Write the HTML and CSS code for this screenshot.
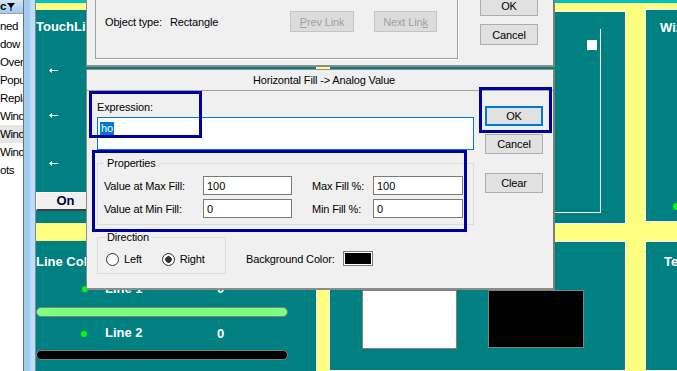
FILE: index.html
```html
<!DOCTYPE html>
<html lang="en">
<head>
  <meta charset="UTF-8">
  <title>Horizontal Fill -&gt; Analog Value</title>
  <link rel="stylesheet" href="styles.css">
</head>
<body>
<div class="screen">

  <aside class="tree">
    <div class="tree-head">c<svg class="pin" width="8" height="9" viewBox="0 0 8 9"><path d="M0 1h8L4 6z" fill="#000"/><path d="M3.5 5h1v4h-1z" fill="#000"/></svg></div>
    <ul class="tree-list">
      <li>ned</li>
      <li>dow</li>
      <li>Over</li>
      <li>Popu</li>
      <li>Repla</li>
      <li>Wind</li>
      <li class="sel">Wind</li>
      <li>Wind</li>
      <li>ots</li>
    </ul>
  </aside>
  <div class="splitter"></div>

  <!-- the HMI screen being edited -->
  <main class="hmi">
    <section class="panel p-a1">
      <div class="hmi-text touch-title">TouchLine</div>
      <svg class="arrow arrow-1" width="9" height="5" viewBox="0 0 9 5"><path d="M0 2.5L3 0v2h6v1H3v2z" fill="#fff"/></svg>
      <svg class="arrow arrow-2" width="9" height="5" viewBox="0 0 9 5"><path d="M0 2.5L3 0v2h6v1H3v2z" fill="#fff"/></svg>
      <svg class="arrow arrow-3" width="9" height="5" viewBox="0 0 9 5"><path d="M0 2.5L3 0v2h6v1H3v2z" fill="#fff"/></svg>
      <div class="on-btn">On</div>
    </section>

    <section class="panel p-b1">
      <div class="frame"></div>
      <div class="knob"></div>
    </section>

    <section class="panel p-c1">
      <div class="hmi-text wiz-title">Wizard</div>
      <span class="dot dot-c"></span>
    </section>

    <section class="panel p-a2">
      <div class="hmi-text line-title">Line Color</div>
      <span class="dot dot-1"></span>
      <div class="hmi-text line-name name-1">Line 1</div>
      <div class="hmi-text line-val val-1">0</div>
      <div class="bar bar-green"></div>
      <span class="dot dot-2"></span>
      <div class="hmi-text line-name name-2">Line 2</div>
      <div class="hmi-text line-val val-2">0</div>
      <div class="bar bar-black"></div>
    </section>

    <section class="panel p-b2">
      <div class="rect rect-white"></div>
      <div class="rect rect-black"></div>
    </section>

    <section class="panel p-c2">
      <div class="hmi-text text-title">Text</div>
    </section>
  </main>

  <!-- object properties dialog (behind) -->
  <div class="dlg dlg-back">
    <div class="groupbox">
      <span class="obj-label">Object type:</span>
      <span>Rectangle</span>
      <div class="links">
        <button class="btn off link-prev"><u>P</u>rev Link</button>
        <button class="btn off link-next">Next Lin<u>k</u></button>
      </div>
    </div>
    <div class="side side-back">
      <button class="btn">OK</button>
      <button class="btn">Cancel</button>
    </div>
  </div>

  <!-- horizontal fill dialog -->
  <div class="dlg dlg-front">
    <div class="dlg-title">Horizontal Fill -&gt; Analog Value</div>
    <div class="dlg-body">
      <div class="form">
        <div class="label">Expression:</div>
        <div class="expr"><span class="expr-sel">ho</span></div>

        <fieldset class="group props">
          <legend>Properties</legend>
          <div class="props-grid">
            <label>Value at Max Fill:</label><input value="100">
            <label class="lbl-2">Max Fill %:</label><input value="100">
            <label>Value at Min Fill:</label><input value="0">
            <label class="lbl-2">Min Fill %:</label><input value="0">
          </div>
        </fieldset>

        <div class="form-foot">
          <fieldset class="group direction">
            <legend>Direction</legend>
            <div class="radios">
              <span class="radio"></span><span class="radio-text">Left</span>
              <span class="radio on"></span><span class="radio-text">Right</span>
            </div>
          </fieldset>
          <div class="bg-color">Background Color: <span class="swatch"></span></div>
        </div>
      </div>

      <div class="side side-front">
        <button class="btn btn-default">OK</button>
        <button class="btn btn-cancel">Cancel</button>
        <button class="btn btn-clear">Clear</button>
      </div>
    </div>
  </div>

  <!-- highlight marks drawn over the screenshot -->
  <div class="mark mark-expr"></div>
  <div class="mark mark-props"></div>
  <div class="mark mark-ok"></div>
</div>
</body>
</html>
```

FILE: styles.css
```css
* {
  box-sizing: border-box;
}

html, body {
  margin: 0;
}

body {
  width: 677px;
  height: 371px;
  overflow: hidden;
  font-family: "Liberation Sans", Arial, sans-serif;
}

.screen {
  position: relative;
  display: flex;
  width: 677px;
  height: 371px;
  overflow: hidden;
  background: #f0f0f0;
}

/* project tree */
.tree {
  width: 24px;
  flex: none;
  background: #fff;
  border-right: 1px solid #6f6f6f;
  overflow: hidden;
  font-size: 11.5px;
  letter-spacing: -0.4px;
  color: #000;
}

.tree-head {
  height: 14px;
  display: flex;
  align-items: center;
  gap: 1px;
  font-weight: bold;
  line-height: 13px;
  background: linear-gradient(#d6e7f8, #a6c7eb);
  border-bottom: 1px solid #8ea9c6;
}

.tree-list {
  list-style: none;
  margin: 3px 0 0;
  padding: 0;
}

.tree-list li {
  height: 18px;
  line-height: 18px;
  white-space: nowrap;
}

.tree-list .sel {
  background: #e6e6e6;
}

.splitter {
  width: 12px;
  flex: none;
  background: linear-gradient(90deg, #a2cdf0 0 6px, #bfddf6 6px);
  border-right: 1px solid #7f8c98;
}

/* hmi canvas */
.hmi {
  flex: 1;
  display: grid;
  grid-template-columns: 281px 12px 297px 19px 1fr;
  grid-template-rows: 213px 18px 1fr;
  padding-top: 7px;
  background: #ffff80;
  border-top: 3px solid #00c0c0;
  overflow: hidden;
}

.panel {
  position: relative;
  background: #008080;
  border: 1px solid #fff;
  overflow: hidden;
  color: #fff;
}

.p-a1 { grid-area: 1 / 1; border-width: 0 1px 0 0; }
.p-a2 { grid-area: 3 / 1; border-width: 0 1px 0 0; }
.p-b1 { grid-area: 1 / 3; margin: 1px 0 -1px; }
.p-b2 { grid-area: 3 / 3; }
.p-c1 { grid-area: 1 / 5; margin: -1px 0 1px; border-right: 0; }
.p-c2 { grid-area: 3 / 5; border-right: 0; }

.hmi-text {
  position: absolute;
  font: bold 13px/16px "Liberation Sans", Arial, sans-serif;
  color: #fff;
  white-space: nowrap;
}

.touch-title { left: 0; top: 9px; }
.line-title { left: 0; top: 13px; }
.wiz-title { left: 14px; top: 10px; }
.text-title { left: 18px; top: 12px; }

.arrow { position: absolute; left: 13px; }
.arrow-1 { top: 58px; }
.arrow-2 { top: 103px; }
.arrow-3 { top: 151px; }

.on-btn {
  position: absolute;
  left: 0;
  top: 182px;
  width: 60px;
  height: 19px;
  background: #f0f0f0;
  border-style: solid;
  border-width: 1px 2px 2px 1px;
  border-color: #fff #404040 #404040 #fff;
  font: bold 13px/16px "Liberation Sans", Arial, sans-serif;
  color: #000033;
  text-align: center;
}

.frame {
  position: absolute;
  left: 0;
  top: 17px;
  width: 271px;
  height: 184px;
  border-right: 1px solid #fff;
  border-bottom: 1px solid #fff;
}

.knob {
  position: absolute;
  left: 257px;
  top: 28px;
  width: 10px;
  height: 10px;
  background: #fff;
}

.dot {
  position: absolute;
  width: 6px;
  height: 6px;
  border-radius: 50%;
  background: #00ff00;
}

.dot-c { left: 27px; top: 193px; width: 7px; height: 7px; }
.dot-1 { left: 46px; top: 45px; }
.dot-2 { left: 45px; top: 90px; }

.name-1 { left: 69px; top: 40px; }
.val-1 { left: 181px; top: 40px; }
.name-2 { left: 69px; top: 84px; }
.val-2 { left: 181px; top: 85px; }

.bar {
  position: absolute;
  left: 0;
  width: 252px;
  height: 10px;
  border: 1px solid #808080;
  border-radius: 5px;
}

.bar-green { top: 66px; background: #80ff80; }
.bar-black { top: 109px; background: #000; }

.rect {
  position: absolute;
  top: 48px;
  border: 1px solid #808080;
}

.rect-white { left: 32px; width: 95px; height: 59px; background: #fff; }
.rect-black { left: 158px; width: 96px; height: 58px; background: #000; }

/* dialogs */
.dlg {
  position: absolute;
  left: 86px;
  width: 469px;
  background: #f0f0f0;
  border: 1px solid #8c8c8c;
  border-right: 2px solid #7c7c7c;
  border-bottom-width: 2px;
  font: 11px/14px "Liberation Sans", Arial, sans-serif;
  letter-spacing: -0.15px;
  color: #000;
}

.btn {
  height: 21px;
  padding: 0;
  background: #e1e1e1;
  border: 1px solid #adadad;
  font: 11px/14px "Liberation Sans", Arial, sans-serif;
  letter-spacing: -0.15px;
  color: #000;
}

.btn.off {
  background: #dcdcdc;
  border-color: #c4c4c4;
  color: #a0a0a0;
}

.dlg-back {
  top: -30px;
  height: 97px;
  display: flex;
  align-items: flex-start;
  padding: 4px 0 0 8px;
}

.groupbox {
  width: 363px;
  height: 84px;
  display: flex;
  align-items: center;
  align-content: flex-end;
  flex-wrap: wrap;
  padding: 0 20px 26px 9px;
  border: 1px solid #a0a0a0;
  box-shadow: 1px 1px 0 #fff;
}

.obj-label {
  width: 65px;
}

.links {
  display: flex;
  gap: 20px;
  margin-left: auto;
}

.link-prev { width: 64px; }
.link-next { width: 63px; }

.side {
  display: flex;
  flex-direction: column;
  width: 58px;
  flex: none;
}

.side-back {
  margin: 20px 0 0 22px;
  gap: 8px;
}

.dlg-front {
  top: 69px;
  height: 221px;
}

.dlg-title {
  height: 21px;
  line-height: 20px;
  padding-left: 8px;
  text-align: center;
  border-bottom: 1px solid #a0a0a0;
}

.dlg-body {
  display: flex;
  padding-left: 10px;
}

.form {
  width: 377px;
}

.label {
  margin-top: 9px;
}

.expr {
  margin-top: 3px;
  height: 33px;
  padding: 3px 0 0 2px;
  background: #fff;
  border: 1px solid #0078d7;
}

.expr-sel {
  display: inline-block;
  padding: 0 1px;
  line-height: 13px;
  background: #0078d7;
  color: #fff;
}

fieldset.group {
  margin: 6px 0 0;
  padding: 6px 9px 6px 6px;
  border: 1px solid #dcdcdc;
  min-width: 0;
}

fieldset.group legend {
  padding: 0 2px 0 3px;
  line-height: 14px;
}

.props-grid {
  display: grid;
  grid-template-columns: 99px 89px 81px 90px;
  grid-auto-rows: 19px;
  row-gap: 4px;
  align-items: center;
}

.lbl-2 {
  padding-left: 20px;
}

.props-grid input {
  width: 100%;
  height: 19px;
  margin: 0;
  padding: 0 3px;
  background: #fff;
  border: 1px solid #7a7a7a;
  font: 11px/14px "Liberation Sans", Arial, sans-serif;
  color: #000;
}

.form-foot {
  display: flex;
  align-items: flex-start;
  margin-top: 5px;
}

fieldset.direction {
  width: 129px;
  margin: 0;
  padding: 8px 8px 7px 8px;
}

fieldset.direction legend {
  padding: 0 2px 0 1px;
}

.radios {
  display: flex;
  align-items: center;
  height: 14px;
}

.radio {
  width: 13px;
  height: 13px;
  flex: none;
  border: 1px solid #333;
  border-radius: 50%;
  background: #fff;
}

.radio.on {
  margin-left: 20px;
  background: radial-gradient(circle, #333 0 3px, #fff 3.6px);
}

.radio-text {
  margin-left: 5px;
}

.bg-color {
  display: flex;
  align-items: center;
  gap: 8px;
  margin: 21px 0 0 20px;
}

.swatch {
  width: 30px;
  height: 15px;
  background: #000;
  border: 1px solid #7a7a7a;
  box-shadow: inset 0 0 0 1px #fff;
}

.side-front {
  margin-left: 11px;
}

.side-front .btn {
  height: 20px;
}

.btn-default {
  margin-top: 15px;
  border: 2px solid #0078d7;
}

.btn-cancel { margin-top: 8px; }
.btn-clear { margin-top: 19px; }

/* annotation marks */
.mark {
  position: absolute;
  border: 3px solid #00009f;
}

.mark-expr { left: 89px; top: 91px; width: 113px; height: 47px; }
.mark-props { left: 92px; top: 150px; width: 375px; height: 82px; }
.mark-ok { left: 479px; top: 87px; width: 73px; height: 46px; }
```
